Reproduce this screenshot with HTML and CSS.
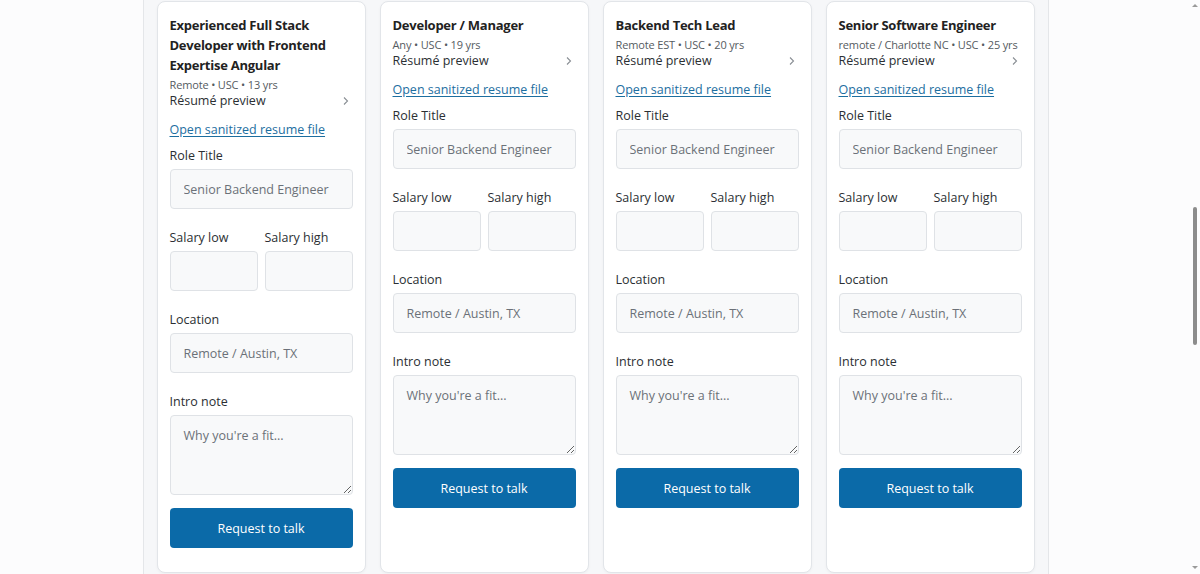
FILE: index.html
```html
<!DOCTYPE html>
<html lang="en">

<head>
  <meta charset="UTF-8" />
  <meta name="viewport" content="width=device-width, initial-scale=1.0" />
  <title>Candidates</title>
  <link rel="stylesheet" href="styles.css">
</head>

<body>
  <div class="board">
    <div class="cards">

      <div class="card">
        <h3 class="cardTitle">Experienced Full Stack Developer with Frontend Expertise Angular</h3>
        <div class="meta">Remote • USC • 13 yrs</div>
        <div class="preview">
          <span>Résumé preview</span>
          <svg class="chev" width="8" height="10" viewBox="0 0 8 10"><path d="M2 1.5 L5.5 5 L2 8.5" fill="none" stroke="#8a8f95" stroke-width="1.1"/></svg>
        </div>
        <a class="fileLink" href="#">Open sanitized resume file</a>
        <div class="field">
          <label class="labelForm">Role Title</label>
          <input class="inputText" type="text" placeholder="Senior Backend Engineer" />
        </div>
        <div class="field pair">
          <div>
            <label class="labelForm">Salary low</label>
            <input class="inputText" type="text" />
          </div>
          <div>
            <label class="labelForm">Salary high</label>
            <input class="inputText" type="text" />
          </div>
        </div>
        <div class="field">
          <label class="labelForm">Location</label>
          <input class="inputText" type="text" placeholder="Remote / Austin, TX" />
        </div>
        <div class="field note">
          <label class="labelForm">Intro note</label>
          <textarea class="inputArea" placeholder="Why you're a fit..."></textarea>
        </div>
        <button class="sendForm" type="button">Request to talk</button>
      </div>

      <div class="card">
        <h3 class="cardTitle">Developer / Manager</h3>
        <div class="meta">Any • USC • 19 yrs</div>
        <div class="preview">
          <span>Résumé preview</span>
          <svg class="chev" width="8" height="10" viewBox="0 0 8 10"><path d="M2 1.5 L5.5 5 L2 8.5" fill="none" stroke="#8a8f95" stroke-width="1.1"/></svg>
        </div>
        <a class="fileLink" href="#">Open sanitized resume file</a>
        <div class="field">
          <label class="labelForm">Role Title</label>
          <input class="inputText" type="text" placeholder="Senior Backend Engineer" />
        </div>
        <div class="field pair">
          <div>
            <label class="labelForm">Salary low</label>
            <input class="inputText" type="text" />
          </div>
          <div>
            <label class="labelForm">Salary high</label>
            <input class="inputText" type="text" />
          </div>
        </div>
        <div class="field">
          <label class="labelForm">Location</label>
          <input class="inputText" type="text" placeholder="Remote / Austin, TX" />
        </div>
        <div class="field note">
          <label class="labelForm">Intro note</label>
          <textarea class="inputArea" placeholder="Why you're a fit..."></textarea>
        </div>
        <button class="sendForm" type="button">Request to talk</button>
      </div>

      <div class="card">
        <h3 class="cardTitle">Backend Tech Lead</h3>
        <div class="meta">Remote EST • USC • 20 yrs</div>
        <div class="preview">
          <span>Résumé preview</span>
          <svg class="chev" width="8" height="10" viewBox="0 0 8 10"><path d="M2 1.5 L5.5 5 L2 8.5" fill="none" stroke="#8a8f95" stroke-width="1.1"/></svg>
        </div>
        <a class="fileLink" href="#">Open sanitized resume file</a>
        <div class="field">
          <label class="labelForm">Role Title</label>
          <input class="inputText" type="text" placeholder="Senior Backend Engineer" />
        </div>
        <div class="field pair">
          <div>
            <label class="labelForm">Salary low</label>
            <input class="inputText" type="text" />
          </div>
          <div>
            <label class="labelForm">Salary high</label>
            <input class="inputText" type="text" />
          </div>
        </div>
        <div class="field">
          <label class="labelForm">Location</label>
          <input class="inputText" type="text" placeholder="Remote / Austin, TX" />
        </div>
        <div class="field note">
          <label class="labelForm">Intro note</label>
          <textarea class="inputArea" placeholder="Why you're a fit..."></textarea>
        </div>
        <button class="sendForm" type="button">Request to talk</button>
      </div>

      <div class="card">
        <h3 class="cardTitle">Senior Software Engineer</h3>
        <div class="meta">remote / Charlotte NC • USC • 25 yrs</div>
        <div class="preview">
          <span>Résumé preview</span>
          <svg class="chev" width="8" height="10" viewBox="0 0 8 10"><path d="M2 1.5 L5.5 5 L2 8.5" fill="none" stroke="#8a8f95" stroke-width="1.1"/></svg>
        </div>
        <a class="fileLink" href="#">Open sanitized resume file</a>
        <div class="field">
          <label class="labelForm">Role Title</label>
          <input class="inputText" type="text" placeholder="Senior Backend Engineer" />
        </div>
        <div class="field pair">
          <div>
            <label class="labelForm">Salary low</label>
            <input class="inputText" type="text" />
          </div>
          <div>
            <label class="labelForm">Salary high</label>
            <input class="inputText" type="text" />
          </div>
        </div>
        <div class="field">
          <label class="labelForm">Location</label>
          <input class="inputText" type="text" placeholder="Remote / Austin, TX" />
        </div>
        <div class="field note">
          <label class="labelForm">Intro note</label>
          <textarea class="inputArea" placeholder="Why you're a fit..."></textarea>
        </div>
        <button class="sendForm" type="button">Request to talk</button>
      </div>

    </div>
  </div>

  <div class="scrollbar" aria-hidden="true">
    <span class="arrowUp"></span>
    <span class="thumb"></span>
    <span class="arrowDown"></span>
  </div>
</body>

</html>
```

FILE: styles.css
```css
html,
body {
  margin: 0;
  height: 100%;
  overflow: hidden;
}

body {
  background-color: #fcfcfd;
  font-family: 'Open Sans', 'Noto Sans', sans-serif;
  color: #212529;
  padding-right: 9px;
}

.board {
  width: 878px;
  margin: 0 auto;
  padding: 1px 13px 0 13px;
  border-left: solid 1px #e4e6e9;
  border-right: solid 1px #e4e6e9;
  background-color: #f6f7f9;
  min-height: 100%;
}

.cards {
  display: grid;
  grid-template-columns: repeat(4, 1fr);
  gap: 14px;
}

.card {
  background-color: #fff;
  border: solid 1px #e2e5e9;
  border-radius: 8px;
  padding: 13px 12px 24px 12px;
  box-shadow: 0 1px 3px rgba(0, 0, 0, 0.04);
}

.cardTitle {
  margin: 0;
  font-size: 13px;
  line-height: 20px;
  font-weight: 700;
  letter-spacing: -0.25px;
  color: #222;
}

.meta {
  margin-top: 3px;
  font-size: 11px;
  line-height: 14px;
  letter-spacing: -0.15px;
  color: #555b61;
}

.preview {
  display: flex;
  justify-content: space-between;
  align-items: center;
  font-size: 12.5px;
  line-height: 18px;
  color: #2b2f33;
}

.chev {
  margin-right: 3px;
}

.fileLink {
  display: block;
  margin-top: 10px;
  font-size: 12.5px;
  line-height: 20px;
  color: #1c6e9f;
  text-decoration: underline;
  text-underline-offset: 2px;
}

.field {
  margin-top: 6px;
  margin-bottom: 19px;
}

.field + .field {
  margin-top: 0;
}

.labelForm {
  display: block;
  font-size: 12.5px;
  line-height: 20px;
  margin-bottom: 3px;
  color: #2b2f33;
}

.pair {
  display: grid;
  grid-template-columns: 1fr 1fr;
  gap: 7px;
}

.inputText,
.inputArea {
  display: block;
  box-sizing: border-box;
  width: 100%;
  height: 40px;
  border: solid 1px #dfe2e6;
  border-radius: 4px;
  background-color: #f8f9fa;
  padding: 0 13px;
  font-family: inherit;
  font-size: 12.5px;
  color: #212529;
}

.inputArea {
  height: 80px;
  padding: 10px 13px;
  line-height: 20px;
  resize: vertical;
}

.inputText::placeholder,
.inputArea::placeholder {
  color: #6b7178;
}

.note {
  margin-bottom: 13px;
}

button.sendForm {
  display: block;
  width: 100%;
  height: 40px;
  border: none;
  border-radius: 4px;
  background-color: #0b6aa8;
  color: #fff;
  font-family: inherit;
  font-size: 12.5px;
}

.scrollbar {
  position: fixed;
  top: 0;
  right: 0;
  width: 12px;
  height: 100%;
}

.thumb {
  position: absolute;
  left: 5px;
  top: 207px;
  width: 4px;
  height: 138px;
  border-radius: 2px;
  background-color: #8c8c8c;
}

.arrowUp,
.arrowDown {
  position: absolute;
  left: 4px;
  width: 0;
  height: 0;
  border-left: 3px solid transparent;
  border-right: 3px solid transparent;
}

.arrowUp {
  top: 4px;
  border-bottom: 3px solid #9a9a9a;
}

.arrowDown {
  bottom: 5px;
  border-top: 3px solid #9a9a9a;
}
```
